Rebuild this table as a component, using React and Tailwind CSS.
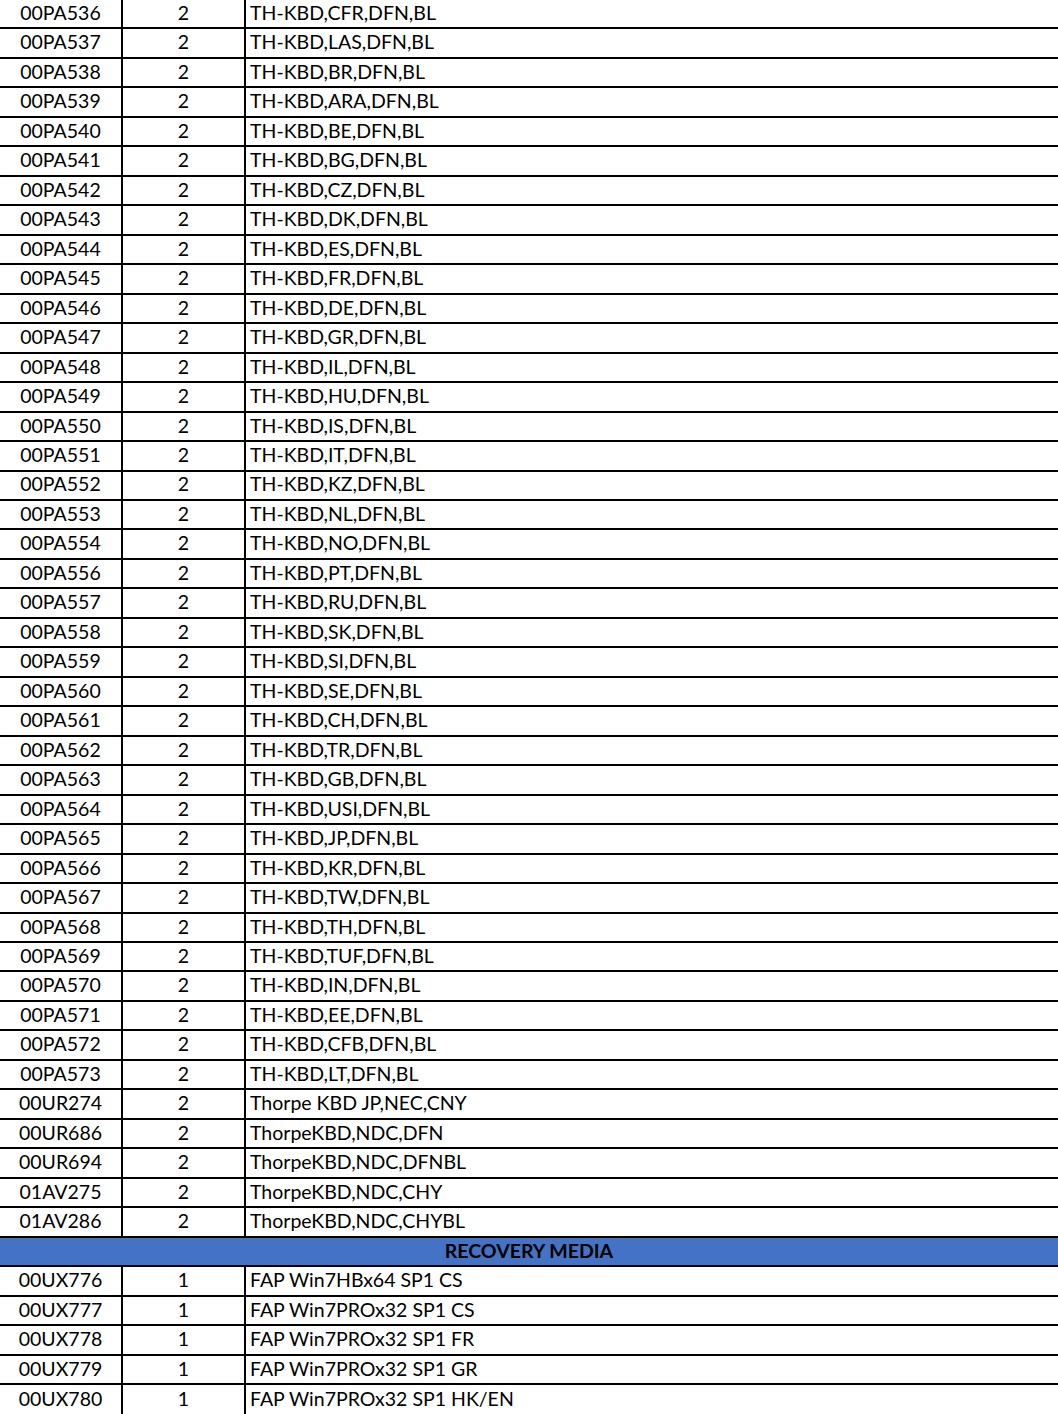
import React from "react";

const pa = [
  ["00PA536", "CFR"], ["00PA537", "LAS"], ["00PA538", "BR"], ["00PA539", "ARA"],
  ["00PA540", "BE"], ["00PA541", "BG"], ["00PA542", "CZ"], ["00PA543", "DK"],
  ["00PA544", "ES"], ["00PA545", "FR"], ["00PA546", "DE"], ["00PA547", "GR"],
  ["00PA548", "IL"], ["00PA549", "HU"], ["00PA550", "IS"], ["00PA551", "IT"],
  ["00PA552", "KZ"], ["00PA553", "NL"], ["00PA554", "NO"], ["00PA556", "PT"],
  ["00PA557", "RU"], ["00PA558", "SK"], ["00PA559", "SI"], ["00PA560", "SE"],
  ["00PA561", "CH"], ["00PA562", "TR"], ["00PA563", "GB"], ["00PA564", "USI"],
  ["00PA565", "JP"], ["00PA566", "KR"], ["00PA567", "TW"], ["00PA568", "TH"],
  ["00PA569", "TUF"], ["00PA570", "IN"], ["00PA571", "EE"], ["00PA572", "CFB"],
  ["00PA573", "LT"],
];

const rowsA = [
  ...pa.map(([c, k]) => [c, "2", `TH-KBD,${k},DFN,BL`]),
  ["00UR274", "2", "Thorpe KBD JP,NEC,CNY"],
  ["00UR686", "2", "ThorpeKBD,NDC,DFN"],
  ["00UR694", "2", "ThorpeKBD,NDC,DFNBL"],
  ["01AV275", "2", "ThorpeKBD,NDC,CHY"],
  ["01AV286", "2", "ThorpeKBD,NDC,CHYBL"],
];

const rowsB = [
  ["00UX776", "1", "FAP Win7HBx64 SP1 CS"],
  ["00UX777", "1", "FAP Win7PROx32 SP1 CS"],
  ["00UX778", "1", "FAP Win7PROx32 SP1 FR"],
  ["00UX779", "1", "FAP Win7PROx32 SP1 GR"],
  ["00UX780", "1", "FAP Win7PROx32 SP1 HK/EN"],
];

function Row({ r, last }) {
  return (
    <div
      className={`grid grid-cols-[121px_123px_1fr] h-[29.47px] ${last ? "" : "border-b-2 border-black"}`}
    >
      <div className="flex items-center justify-center pb-[2px]">{r[0]}</div>
      <div className="flex items-center justify-center border-l-2 border-black pb-[2px]">{r[1]}</div>
      <div className="flex items-center border-l-2 border-black pl-[4px] pb-[2px]">{r[2]}</div>
    </div>
  );
}

export default function App() {
  return (
    <div
      className="w-[1058px] h-[1414px] overflow-hidden bg-white text-black text-[19.5px] leading-none"
      style={{ fontFamily: "Lato, 'Open Sans', sans-serif" }}
    >
      {rowsA.map((r) => (
        <Row key={r[0]} r={r} />
      ))}
      <div className="h-[29.47px] bg-[#4472c4] border-b-2 border-black flex items-center justify-center font-bold pb-[2px]">
        RECOVERY MEDIA
      </div>
      {rowsB.map((r, i) => (
        <Row key={r[0]} r={r} last={i === rowsB.length - 1} />
      ))}
    </div>
  );
}
